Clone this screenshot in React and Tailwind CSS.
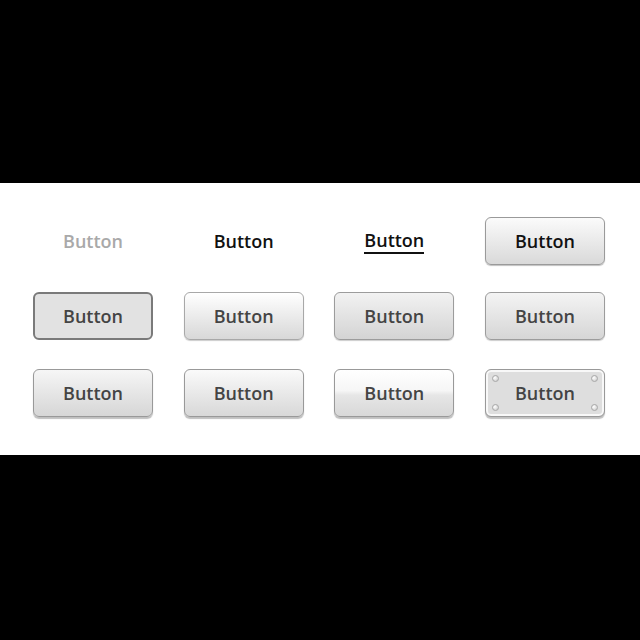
const font = { fontFamily: '"Open Sans", "DejaVu Sans", sans-serif' };

function Rivet({ pos }) {
  return (
    <span
      className={`absolute ${pos} h-[7px] w-[7px] rounded-full border border-[#a8a8a8] bg-[radial-gradient(circle_at_35%_35%,#ffffff,#c4c4c4)]`}
    />
  );
}

function Btn({ className, children }) {
  return (
    <div
      className={`relative flex h-[48px] w-[120px] items-center justify-center text-[18px] font-semibold ${className}`}
    >
      {children}
    </div>
  );
}

export default function App() {
  return (
    <div className="flex h-[640px] w-[640px] flex-col bg-black" style={font}>
      <div className="h-[183px]" />
      <div className="flex h-[272px] flex-col bg-white pl-[33px] pt-[34px]">
        <div className="flex w-[572px] justify-between">
          <Btn className="text-[#a9a9a9]">Button</Btn>
          <Btn className="text-[#111]">Button</Btn>
          <Btn className="text-[#111]">
            <span className="border-b-2 border-[#111] leading-[24px]">Button</span>
          </Btn>
          <Btn className="rounded-[6px] border border-[#9a9a9a] bg-gradient-to-b from-[#fbfbfb] to-[#d9d9d9] text-[#111] shadow-[0_1px_1px_rgba(0,0,0,0.25)]">
            Button
          </Btn>
        </div>
        <div className="mt-[27px] flex w-[572px] justify-between">
          <Btn className="rounded-[6px] border-2 border-[#7a7a7a] bg-[#e2e2e2] text-[#444]">Button</Btn>
          <Btn className="rounded-[6px] border border-[#a8a8a8] bg-gradient-to-b from-[#ffffff] to-[#d8d8d8] text-[#444] shadow-[0_1px_1px_rgba(0,0,0,0.2)]">
            Button
          </Btn>
          <Btn className="rounded-[6px] border border-[#9c9c9c] bg-gradient-to-b from-[#f2f2f2] to-[#d4d4d4] text-[#444] shadow-[0_1px_1px_rgba(0,0,0,0.2)]">
            Button
          </Btn>
          <Btn className="rounded-[6px] border border-[#9c9c9c] bg-gradient-to-b from-[#f4f4f4] to-[#d6d6d6] text-[#444] shadow-[0_1px_1px_rgba(0,0,0,0.2)]">
            Button
          </Btn>
        </div>
        <div className="mt-[29px] flex w-[572px] justify-between">
          <Btn className="rounded-[6px] border border-[#999] bg-gradient-to-b from-[#f6f6f6] to-[#d6d6d6] text-[#444] shadow-[0_2px_1px_rgba(0,0,0,0.25)]">
            Button
          </Btn>
          <Btn className="rounded-[6px] border border-[#999] bg-gradient-to-b from-[#fafafa] to-[#d8d8d8] text-[#444] shadow-[0_2px_1px_rgba(0,0,0,0.25)]">
            Button
          </Btn>
          <Btn className="rounded-[6px] border border-[#999] bg-[linear-gradient(to_bottom,#ffffff_0%,#f6f6f6_45%,#e6e6e6_55%,#d8d8d8_100%)] text-[#444] shadow-[0_2px_1px_rgba(0,0,0,0.25)]">
            Button
          </Btn>
          <Btn className="rounded-[6px] border border-[#999] bg-[#dedede] text-[#444] shadow-[inset_0_0_0_2px_#f8f8f8,0_2px_1px_rgba(0,0,0,0.25)]">
            <Rivet pos="left-[6px] top-[5px]" />
            <Rivet pos="right-[6px] top-[5px]" />
            <Rivet pos="left-[6px] bottom-[5px]" />
            <Rivet pos="right-[6px] bottom-[5px]" />
            Button
          </Btn>
        </div>
      </div>
      <div className="flex-1" />
    </div>
  );
}
